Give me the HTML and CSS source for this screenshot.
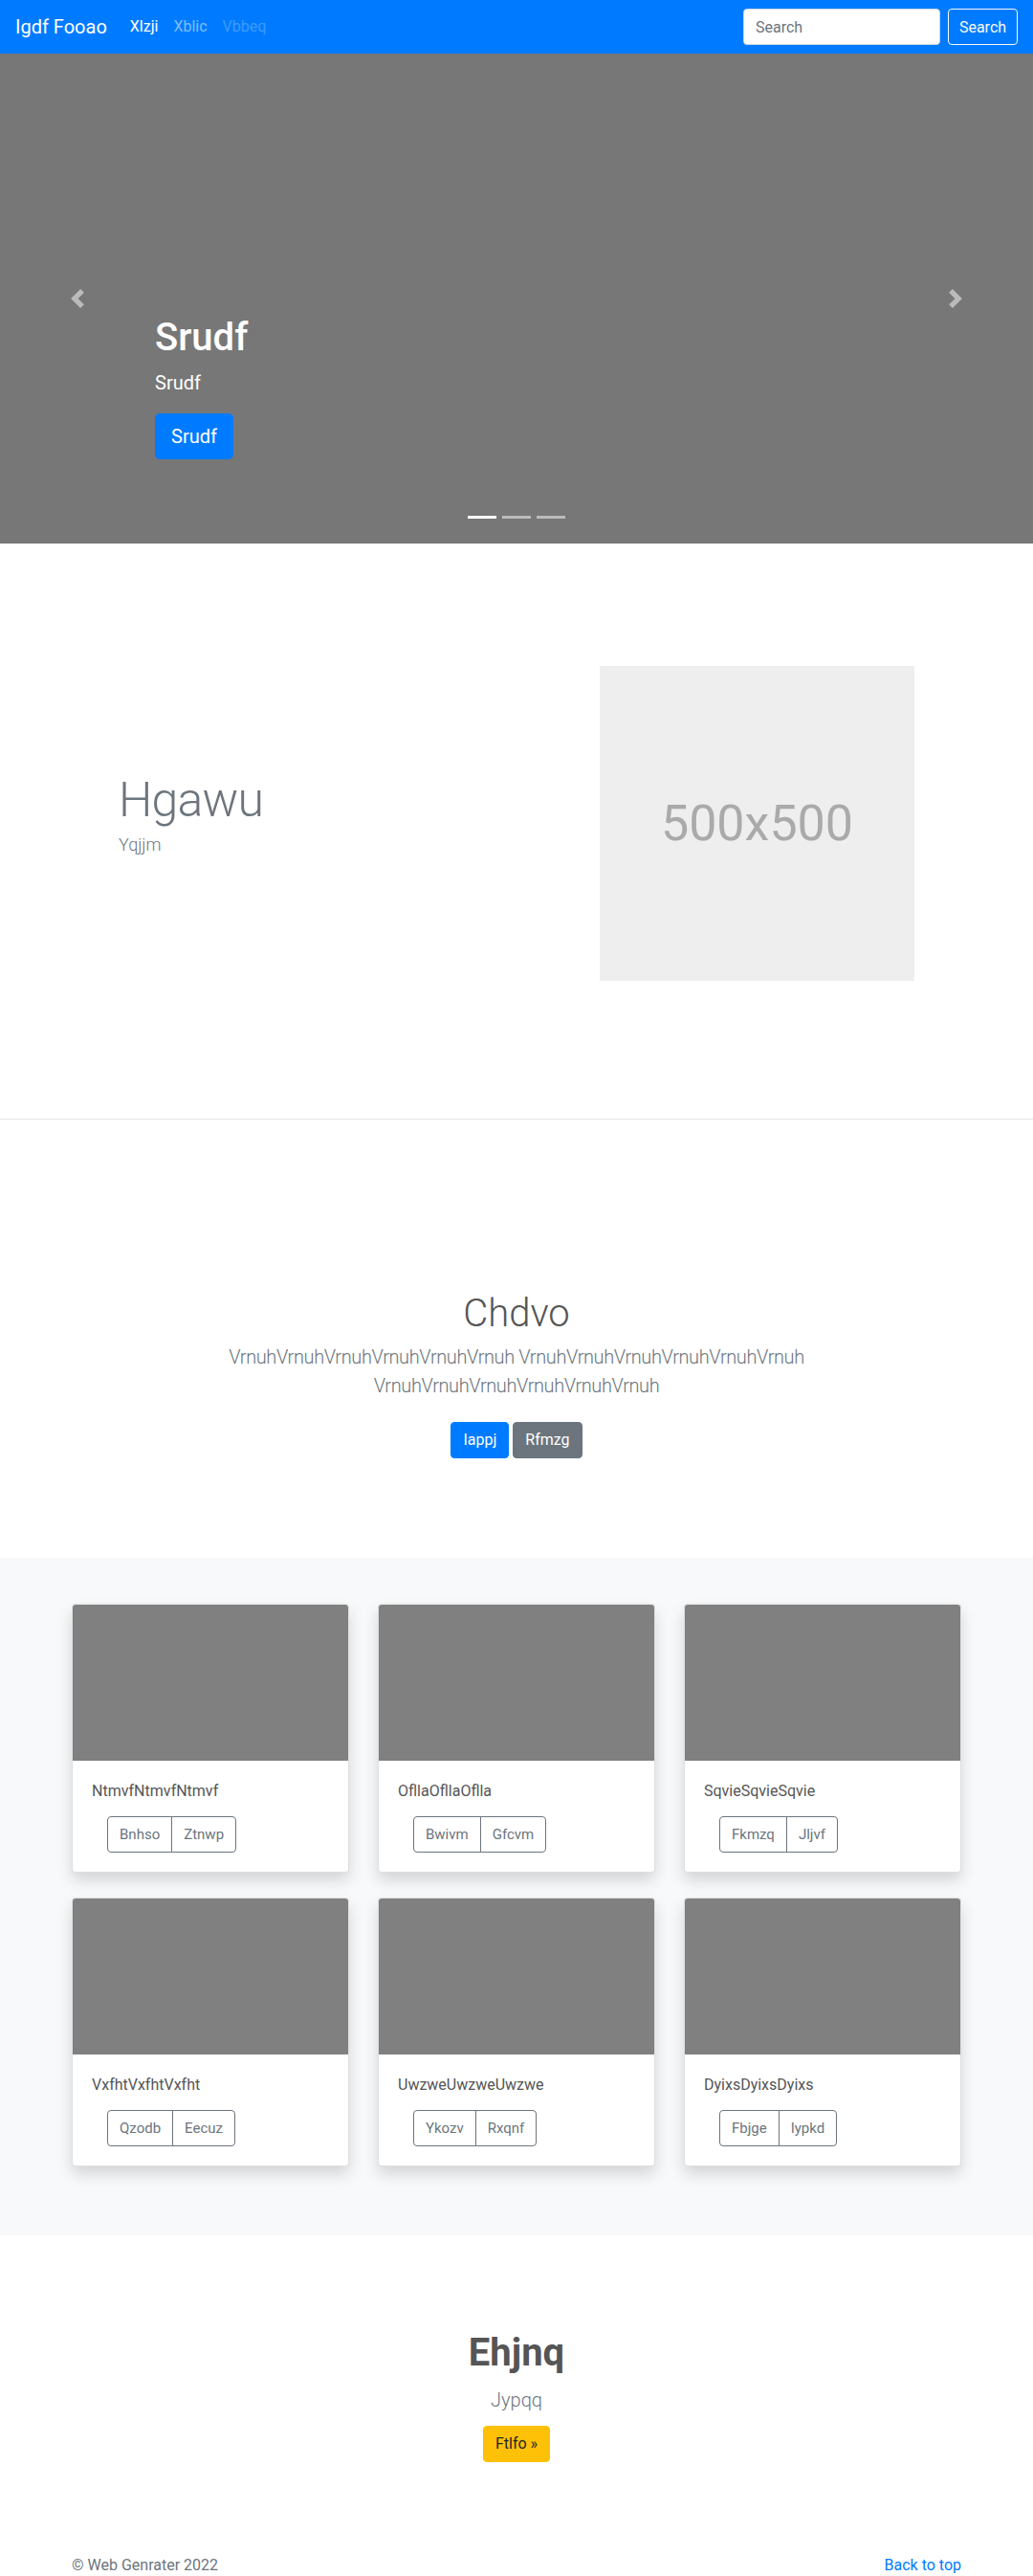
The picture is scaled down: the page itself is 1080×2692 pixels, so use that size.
FILE: index.html
```html
<!DOCTYPE html>
<html lang="en">
<head>
    <meta charset="UTF-8">
    <title>Igdf Fooao</title>
    <link rel="stylesheet" href="styles.css">
</head>
<body>
    <nav class="navbar">
        <a class="brand" href="#">Igdf Fooao</a>
        <ul class="nav-links">
            <li><a class="active" href="#">Xlzji</a></li>
            <li><a href="#">Xblic</a></li>
            <li><a class="disabled" href="#">Vbbeq</a></li>
        </ul>
        <form class="search">
            <input type="text" placeholder="Search">
            <button type="submit">Search</button>
        </form>
    </nav>

    <div class="carousel">
        <a class="control prev" href="#">
            <svg width="20" height="20" viewBox="0 0 8 8"><path fill="#fff" d="M5.25 0l-4 4 4 4 1.5-1.5L4.25 4l2.5-2.5L5.25 0z"/></svg>
        </a>
        <div class="caption">
            <h1>Srudf</h1>
            <p>Srudf</p>
            <a class="btn btn-primary btn-lg" href="#">Srudf</a>
        </div>
        <a class="control next" href="#">
            <svg width="20" height="20" viewBox="0 0 8 8"><path fill="#fff" d="M2.75 0l-1.5 1.5L3.75 4l-2.5 2.5L2.75 8l4-4-4-4z"/></svg>
        </a>
        <ol class="indicators">
            <li class="active"></li>
            <li></li>
            <li></li>
        </ol>
    </div>

    <div class="featurette">
        <div class="featurette-text">
            <h2>Hgawu</h2>
            <p>Yqjjm</p>
        </div>
        <div class="placeholder">500x500</div>
    </div>

    <hr class="divider">

    <section class="intro">
        <h1>Chdvo</h1>
        <p class="lead">VrnuhVrnuhVrnuhVrnuhVrnuhVrnuh VrnuhVrnuhVrnuhVrnuhVrnuhVrnuh VrnuhVrnuhVrnuhVrnuhVrnuhVrnuh</p>
        <div class="intro-actions">
            <a class="btn btn-primary" href="#">Iappj</a>
            <a class="btn btn-secondary" href="#">Rfmzg</a>
        </div>
    </section>

    <div class="album">
        <div class="card-grid">
            <div class="card">
                <div class="card-img"></div>
                <div class="card-body">
                    <p class="card-text">NtmvfNtmvfNtmvf</p>
                    <div class="btn-group"><button>Bnhso</button><button>Ztnwp</button></div>
                </div>
            </div>
            <div class="card">
                <div class="card-img"></div>
                <div class="card-body">
                    <p class="card-text">OfllaOfllaOflla</p>
                    <div class="btn-group"><button>Bwivm</button><button>Gfcvm</button></div>
                </div>
            </div>
            <div class="card">
                <div class="card-img"></div>
                <div class="card-body">
                    <p class="card-text">SqvieSqvieSqvie</p>
                    <div class="btn-group"><button>Fkmzq</button><button>Jljvf</button></div>
                </div>
            </div>
            <div class="card">
                <div class="card-img"></div>
                <div class="card-body">
                    <p class="card-text">VxfhtVxfhtVxfht</p>
                    <div class="btn-group"><button>Qzodb</button><button>Eecuz</button></div>
                </div>
            </div>
            <div class="card">
                <div class="card-img"></div>
                <div class="card-body">
                    <p class="card-text">UwzweUwzweUwzwe</p>
                    <div class="btn-group"><button>Ykozv</button><button>Rxqnf</button></div>
                </div>
            </div>
            <div class="card">
                <div class="card-img"></div>
                <div class="card-body">
                    <p class="card-text">DyixsDyixsDyixs</p>
                    <div class="btn-group"><button>Fbjge</button><button>Iypkd</button></div>
                </div>
            </div>
        </div>
    </div>

    <section class="cta">
        <h2>Ehjnq</h2>
        <p>Jypqq</p>
        <a class="btn btn-warning" href="#">Ftlfo &raquo;</a>
    </section>

    <footer class="footer">
        <p>&copy; Web Genrater 2022</p>
        <a href="#">Back to top</a>
    </footer>
</body>
</html>
```

FILE: styles.css
```css
body {
    margin: 0;
    font-family: Roboto, "Noto Sans", sans-serif;
    font-size: 16px;
    line-height: 24px;
    color: #212529;
    background-color: #fff;
}
a {
    text-decoration: none;
}

/* navbar */
.navbar {
    display: flex;
    align-items: center;
    height: 56px;
    padding: 0 16px;
    background-color: #007bff;
}
.brand {
    color: #fff;
    font-size: 20px;
    line-height: 30px;
    margin-right: 16px;
}
.nav-links {
    display: flex;
    list-style: none;
    margin: 0;
    padding: 0;
}
.nav-links a {
    display: block;
    padding: 8px;
    color: rgba(255, 255, 255, .5);
}
.nav-links a.active {
    color: #fff;
}
.nav-links a.disabled {
    color: rgba(255, 255, 255, .25);
}
.search {
    display: flex;
    margin-left: auto;
}
.search input {
    width: 206px;
    height: 38px;
    box-sizing: border-box;
    padding: 6px 12px;
    margin-right: 8px;
    border: 1px solid #ced4da;
    border-radius: 4px;
    font-family: inherit;
    font-size: 16px;
    color: #495057;
}
.search input::placeholder {
    color: #6c757d;
}
.search button {
    width: 73px;
    height: 38px;
    padding: 0;
    border: 1px solid #f8f9fa;
    border-radius: 4px;
    background: transparent;
    color: #f8f9fa;
    font-family: inherit;
    font-size: 16px;
}

/* buttons */
.btn {
    display: inline-block;
    padding: 6px 12px;
    border: 1px solid transparent;
    border-radius: 4px;
    font-size: 16px;
    line-height: 24px;
    color: #fff;
}
.btn-lg {
    padding: 8px 16px;
    font-size: 20px;
    line-height: 30px;
    border-radius: 5px;
}
.btn-primary {
    background-color: #007bff;
    border-color: #007bff;
}
.btn-secondary {
    background-color: #6c757d;
    border-color: #6c757d;
}
.btn-warning {
    background-color: #ffc107;
    border-color: #ffc107;
    color: #212529;
}

/* carousel */
.carousel {
    position: relative;
    height: 512px;
    box-sizing: border-box;
    display: flex;
    flex-direction: column;
    justify-content: flex-end;
    align-items: flex-start;
    padding: 0 0 88px 162px;
    background-color: #777;
    color: #fff;
}
.caption h1 {
    margin: 0 0 8px;
    font-size: 40px;
    line-height: 48px;
    font-weight: 500;
}
.caption p {
    margin: 0 0 17px;
    font-size: 20px;
    line-height: 30px;
}
.control {
    position: absolute;
    top: 0;
    bottom: 0;
    width: 162px;
    display: flex;
    align-items: center;
    justify-content: center;
    opacity: .5;
}
.control.prev {
    left: 0;
}
.control.next {
    right: 0;
}
.indicators {
    position: absolute;
    left: 0;
    right: 0;
    bottom: 26px;
    display: flex;
    justify-content: center;
    gap: 6px;
    list-style: none;
    margin: 0;
    padding: 0;
}
.indicators li {
    width: 30px;
    height: 3px;
    background-color: rgba(255, 255, 255, .5);
}
.indicators li.active {
    background-color: #fff;
}

/* featurette */
.featurette {
    width: 832px;
    margin: 0 auto;
    padding: 128px 0 144px;
    display: flex;
    justify-content: space-between;
}
.featurette-text {
    padding-top: 115px;
}
.featurette-text h2 {
    margin: 0 0 8px;
    font-size: 50px;
    line-height: 50px;
    font-weight: 300;
    letter-spacing: -.8px;
    color: #6c757d;
}
.featurette-text p {
    margin: 0;
    font-size: 18px;
    line-height: 27px;
    font-weight: 300;
    color: #6c757d;
}
.placeholder {
    width: 329px;
    height: 329px;
    display: flex;
    align-items: center;
    justify-content: center;
    background-color: #eee;
    color: #aaa;
    font-size: 52px;
}
.divider {
    margin: 0;
    border: 0;
    border-top: 1px solid rgba(0, 0, 0, .1);
}

/* intro */
.intro {
    padding: 179px 0 104px;
    text-align: center;
}
.intro h1 {
    margin: 0 0 6px;
    font-size: 40px;
    line-height: 48px;
    font-weight: 300;
    color: #555;
}
.intro .lead {
    max-width: 700px;
    margin: 0 auto;
    font-size: 20px;
    line-height: 30px;
    font-weight: 300;
    letter-spacing: -.4px;
    color: #6c757d;
}
.intro-actions {
    margin-top: 23px;
    display: flex;
    justify-content: center;
    gap: 4px;
}

/* album */
.album {
    background-color: #f8f9fa;
    padding: 48px 0 72px;
}
.card-grid {
    width: 930px;
    margin: 0 auto;
    display: grid;
    grid-template-columns: repeat(3, 290px);
    column-gap: 30px;
    row-gap: 26px;
}
.card {
    background-color: #fff;
    border: 1px solid rgba(0, 0, 0, .125);
    border-radius: 4px;
    box-shadow: 0 8px 16px rgba(0, 0, 0, .15);
    overflow: hidden;
}
.card-img {
    height: 163px;
    background-color: #808080;
}
.card-body {
    padding: 21px 20px 20px;
}
.card-text {
    margin: 0 0 16px;
    font-size: 16px;
    line-height: 21px;
    color: #555;
}
.btn-group {
    display: inline-flex;
    margin-left: 16px;
}
.btn-group button {
    padding: 6px 12px;
    border: 1px solid #6c757d;
    background: transparent;
    color: #6c757d;
    font-family: inherit;
    font-size: 15px;
    line-height: 24px;
}
.btn-group button:first-child {
    border-radius: 4px 0 0 4px;
}
.btn-group button:last-child {
    margin-left: -1px;
    border-radius: 0 4px 4px 0;
}

/* call to action */
.cta {
    padding: 99px 0 49px;
    text-align: center;
}
.cta h2 {
    margin: 0 0 10px;
    font-size: 40px;
    line-height: 48px;
    font-weight: 700;
    color: #555;
}
.cta p {
    margin: 0 0 12px;
    font-size: 20px;
    line-height: 30px;
    font-weight: 300;
    color: #6c757d;
}

/* footer */
.footer {
    width: 930px;
    margin: 0 auto;
    padding-top: 47px;
    display: flex;
    justify-content: space-between;
    color: #6c757d;
}
.footer p {
    margin: 0;
}
.footer a {
    color: #007bff;
}
```
